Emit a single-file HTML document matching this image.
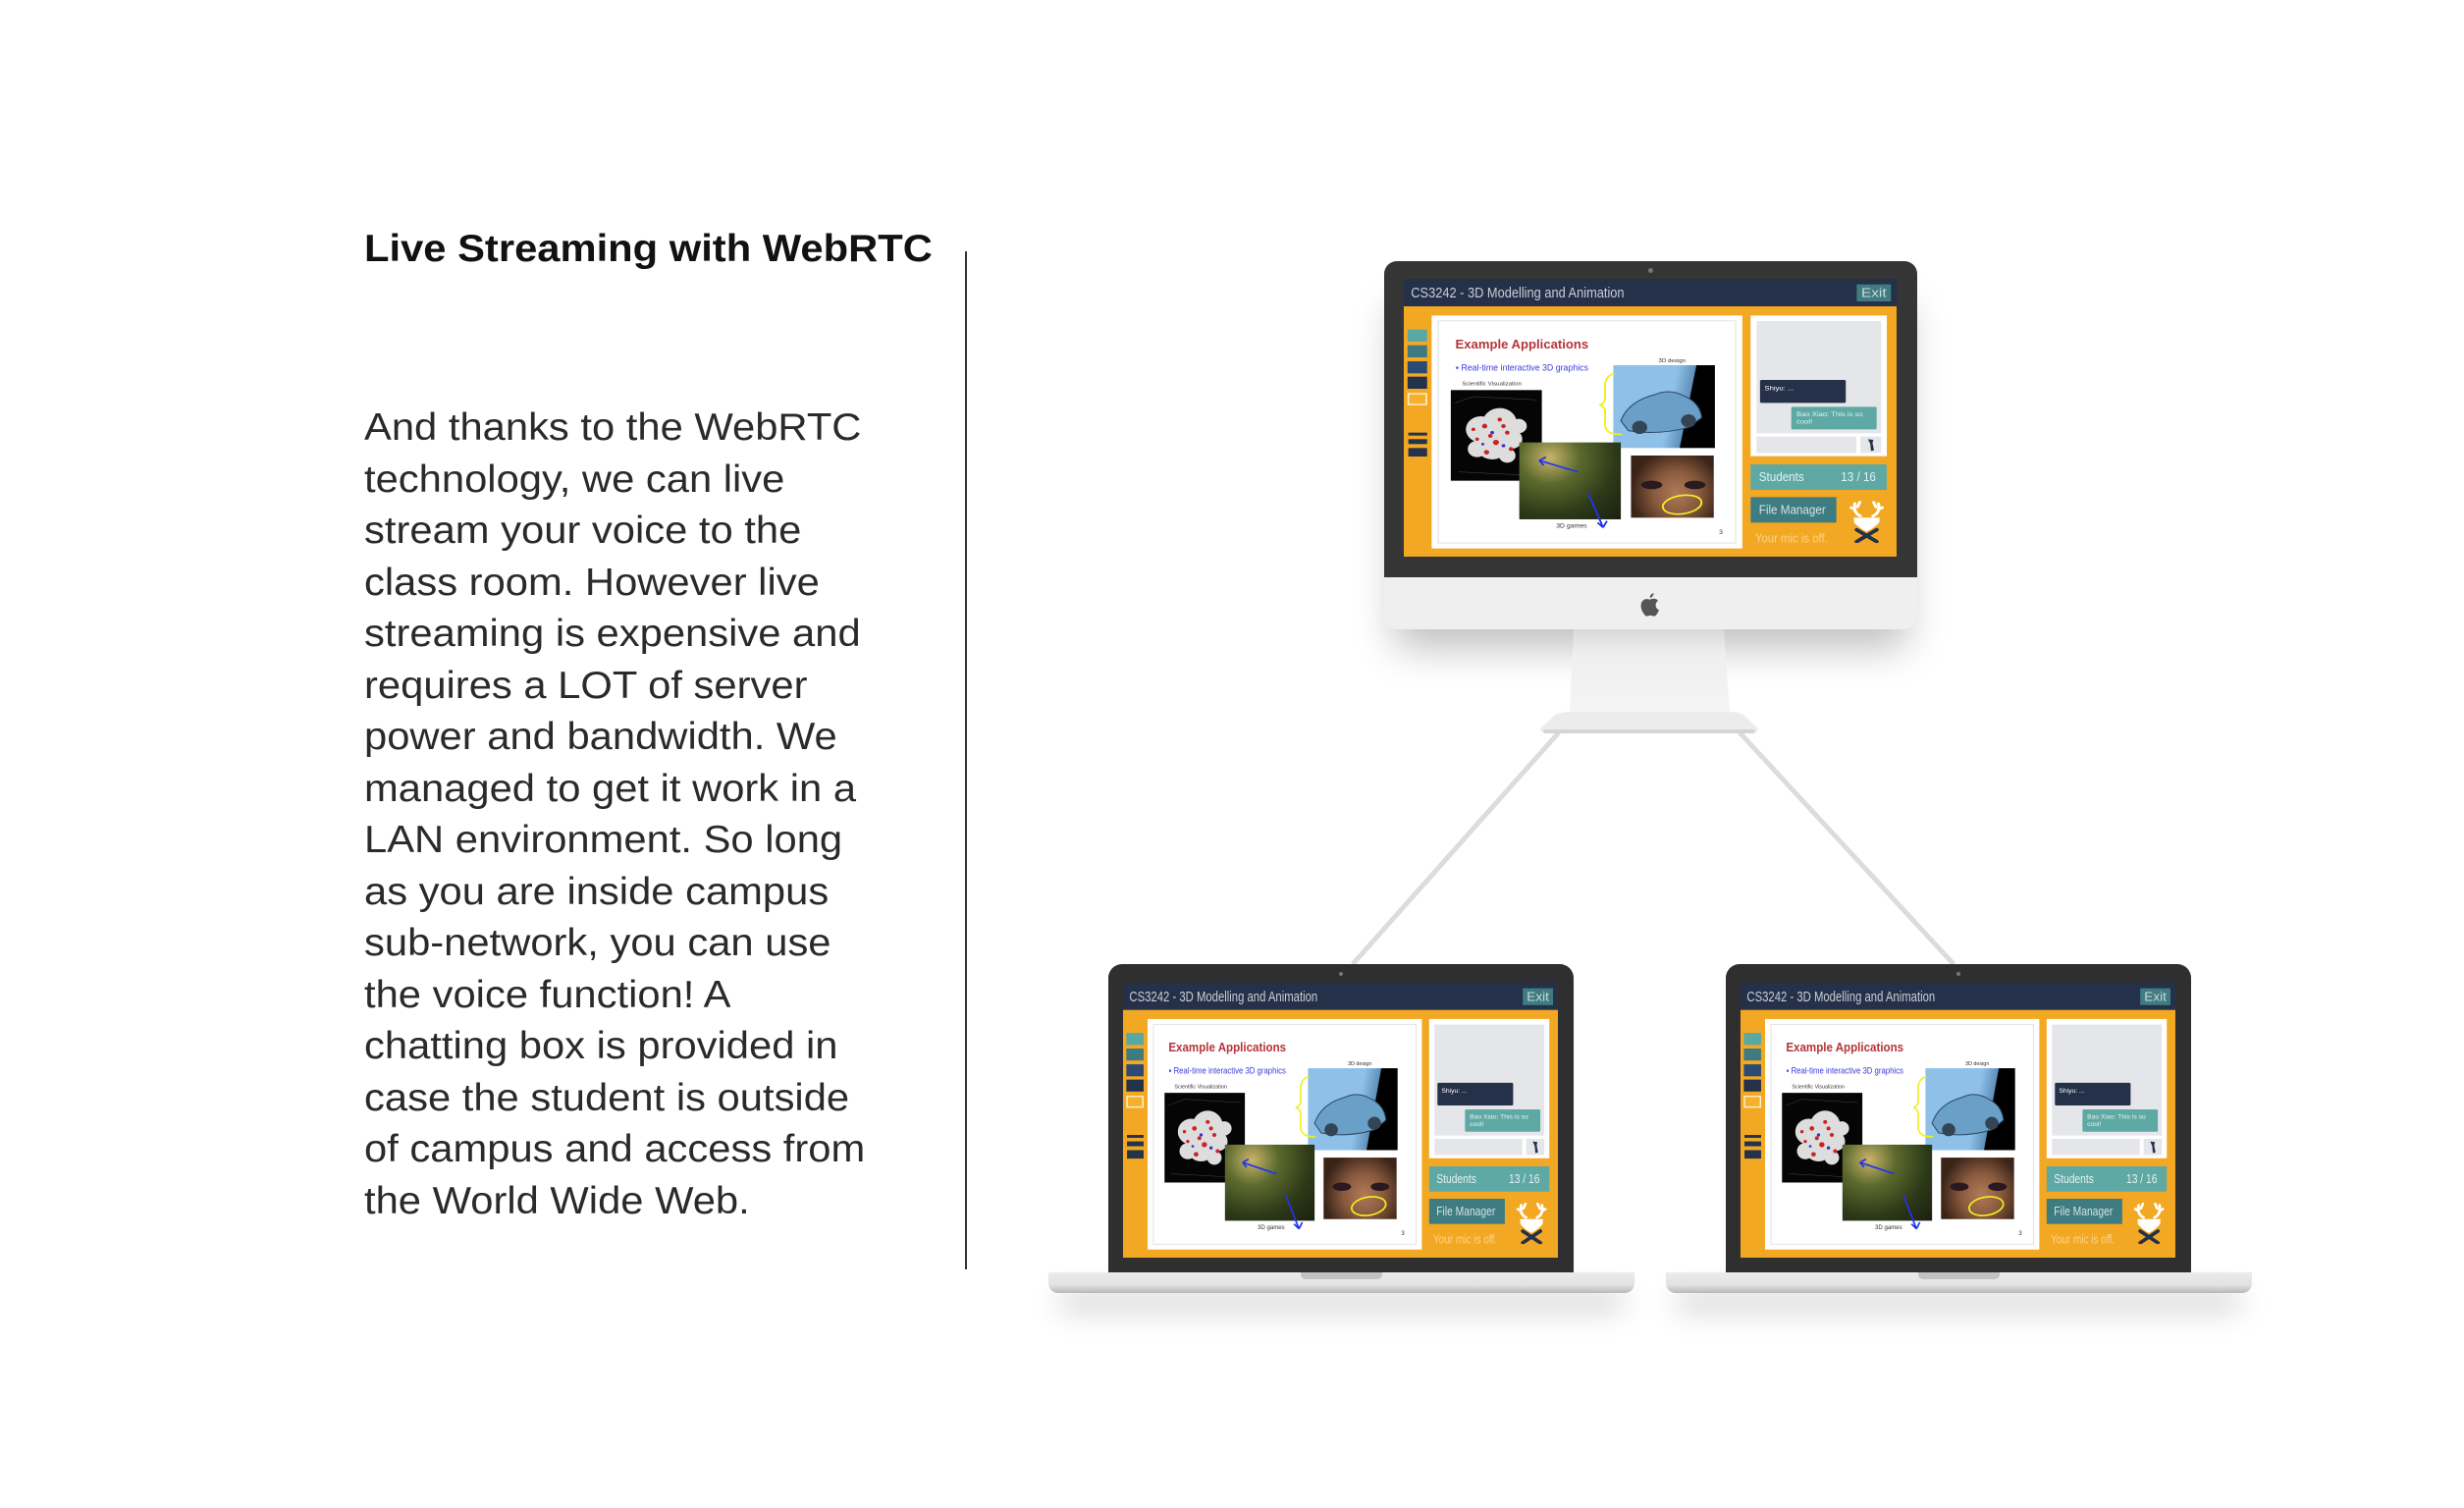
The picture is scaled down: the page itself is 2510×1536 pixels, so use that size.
<!DOCTYPE html>
<html><head><meta charset="utf-8"><style>
*{margin:0;padding:0;box-sizing:border-box}
body{width:2510px;height:1536px;background:#fff;position:relative;overflow:hidden;font-family:"Liberation Sans",sans-serif}
.abs{position:absolute}
.h1{left:371px;top:228px;font-size:39px;line-height:52.5px;font-weight:bold;color:#111;transform:scaleX(1.07);transform-origin:left top;white-space:nowrap}
.body{left:371px;top:410px;font-size:39px;line-height:52.5px;color:#2a2a2a;transform:scaleX(1.07);transform-origin:left top;white-space:nowrap}
.scr{position:absolute;left:0;top:0;width:1310px;height:849px;background:#f3a823;transform-origin:0 0;overflow:hidden;font-family:"Liberation Sans",sans-serif}
.scr div{position:absolute}
.scr span{white-space:nowrap}
.tb{left:0;top:0;width:1310px;height:84px;background:#243149}
.tt{left:19px;top:18px;font-size:44px;color:#c9ced6;white-space:nowrap;transform:scaleX(.76);transform-origin:left top}
.ex{left:1204px;top:17px;width:91px;height:52px;background:#3f7c82;color:#cfd9da;font-size:40px;line-height:52px;text-align:center}
.sq{left:10px;width:52px;height:37px}
.slide{left:74px;top:112px;width:826px;height:712px;background:#fff}
.slin{left:90px;top:127px;width:794px;height:682px;border:3px solid #e2e2e2}
.eat{left:137px;top:180px;font-size:38px;font-weight:bold;color:#b5343a;white-space:nowrap;transform:scaleX(.9);transform-origin:left top}
.bul{left:138px;top:256px;font-size:27px;color:#3a3ae0;white-space:nowrap;transform:scaleX(.85);transform-origin:left top}
.sm{font-size:16px;color:#333;white-space:nowrap}
.mol{left:125px;top:340px;width:242px;height:277px;background:#050505}
.car{left:557px;top:264px;width:270px;height:253px;background:linear-gradient(100deg,#8fc0e8 0 55%,#5d8fb8 70%,#000 70.5%)}
.for{left:307px;top:500px;width:270px;height:235px;background:radial-gradient(ellipse at 30% 20%,#c9b46a 0,#5c6a2e 30%,#2d3a18 65%,#1a1f10 100%)}
.face{left:604px;top:540px;width:220px;height:190px;background:radial-gradient(ellipse 55% 70% at 55% 60%,#b07a58 0,#8a5a3e 50%,#3a2418 100%)}
.rp{left:922px;top:112px;width:362px;height:430px;background:#fff}
.rg{left:938px;top:129px;width:331px;height:343px;background:#e4e6ea}
.b1{left:947px;top:309px;width:228px;height:70px;background:#243149;color:#fff;font-size:20px;padding:14px 12px;border-radius:4px}
.b2{left:1030px;top:391px;width:227px;height:69px;background:#5fa9a5;color:#e6f4f3;font-size:20px;padding:12px 14px;line-height:22px;border-radius:4px}
.inp{left:938px;top:482px;width:265px;height:50px;background:#e4e6ea}
.snd{left:1214px;top:482px;width:55px;height:50px;background:#e4e6ea}
.stu{left:922px;top:567px;width:362px;height:78px;background:#5fa9a5;color:#e3f1f0;font-size:38px;line-height:78px}
.fm{left:922px;top:667px;width:228px;height:78px;background:#3f7c82;color:#d4e3e4;font-size:38px;line-height:78px}
.cx{position:absolute;display:inline-block;transform:scaleX(.8);transform-origin:left center}
.mic{left:934px;top:772px;font-size:38px;color:#fbd38a;white-space:nowrap;transform:scaleX(.78);transform-origin:left top}
</style></head><body>

<div class="abs h1">Live Streaming with WebRTC</div>
<div class="abs body">And thanks to the WebRTC<br>technology, we can live<br>stream your voice to the<br>class room. However live<br>streaming is expensive and<br>requires a LOT of server<br>power and bandwidth. We<br>managed to get it work in a<br>LAN environment. So long<br>as you are inside campus<br>sub-network, you can use<br>the voice function! A<br>chatting box is provided in<br>case the student is outside<br>of campus and access from<br>the World Wide Web.</div>
<div class="abs" style="left:983px;top:256px;width:2px;height:1037px;background:#333"></div>

<svg class="abs" style="left:0;top:0" width="2510" height="1536">
<line x1="1588" y1="746" x2="1378" y2="982" stroke="#dcdcdc" stroke-width="5"/>
<line x1="1772" y1="746" x2="1990" y2="982" stroke="#dcdcdc" stroke-width="5"/>
</svg>

<!-- iMac -->
<div class="abs" style="left:1420px;top:290px;width:523px;height:350px;box-shadow:0 20px 40px rgba(0,0,0,.25);border-radius:14px"></div>
<svg class="abs" style="left:1560px;top:638px" width="240" height="112">
<defs><linearGradient id="st" x1="0" y1="0" x2="0" y2="1"><stop offset="0" stop-color="#d9d9d9"/><stop offset=".3" stop-color="#efefef"/><stop offset="1" stop-color="#f4f4f4"/></linearGradient></defs>
<path d="M43 3 H196 L202 88 H39 Z" fill="url(#st)"/>
<path d="M22 92 Q26 87 40 87 H200 Q214 87 218 92 L231 104 Q232 108 224 108 H16 Q8 108 9 104 Z" fill="#ececec"/>
<rect x="12" y="105" width="216" height="4" rx="2" fill="#d5d5d5"/>
</svg>
<div class="abs" style="left:1410px;top:266px;width:543px;height:322px;background:#353535;border-radius:13px 13px 0 0"></div>
<div class="abs" style="left:1679px;top:273px;width:5px;height:5px;border-radius:50%;background:#777"></div>
<div class="abs" style="left:1410px;top:588px;width:543px;height:53px;background:#efefef;border-radius:0 0 13px 13px"></div>
<svg class="abs" style="left:1671px;top:603px" width="20" height="25" viewBox="0 0 22 28"><path d="M15 1 Q15 5 11 7 Q10 3 15 1 Z M11 8.5 Q13 7.5 15.5 7.6 Q18.5 7.8 20 10 Q17 12 17.3 15.5 Q17.6 19 21 20.5 Q19.5 25 17 27 Q15.5 28 13.8 27.3 Q11 26.2 8.5 27.3 Q6.5 28.2 5 26.5 Q1 22 0.5 17 Q0 11 4 8.8 Q6.5 7.5 9 8.3 Z" fill="#555"/></svg>

<div class="abs" style="left:1430px;top:284px;width:502px;height:283px;overflow:hidden">
<div class="scr" style="transform:scale(.3832,.3333)">
<div class="tb"></div><div class="tt">CS3242 - 3D Modelling and Animation</div><div class="ex">Exit</div>
<div class="sq" style="top:155px;background:#5aa8a4"></div><div class="sq" style="top:203px;background:#3f7a82"></div><div class="sq" style="top:252px;background:#2b4a74"></div><div class="sq" style="top:299px;background:#24324c"></div><div class="sq" style="top:349px;border:4px solid #fff3d6;background:#f6b02c"></div>
<div style="left:12px;top:470px;width:50px;height:9px;background:#24324c"></div><div style="left:12px;top:490px;width:50px;height:15px;background:#24324c"></div><div style="left:12px;top:517px;width:50px;height:26px;background:#24324c"></div>
<div class="slide"></div><div class="slin"></div>
<div class="eat">Example Applications</div>
<div class="bul">▪ Real-time interactive 3D graphics</div>
<div class="sm" style="left:677px;top:242px">3D design</div>
<div class="sm" style="left:155px;top:313px">Scientific Visualization</div>
<div class="mol"><svg width="242" height="277"><g fill="#ddd"><circle cx="80" cy="120" r="40"/><circle cx="130" cy="100" r="45"/><circle cx="110" cy="170" r="42"/><circle cx="160" cy="150" r="30"/><circle cx="70" cy="180" r="25"/><circle cx="150" cy="200" r="22"/><circle cx="180" cy="110" r="22"/></g><g fill="#c22"><circle cx="90" cy="110" r="7"/><circle cx="130" cy="90" r="6"/><circle cx="120" cy="160" r="8"/><circle cx="150" cy="130" r="6"/><circle cx="95" cy="190" r="7"/><circle cx="70" cy="150" r="5"/><circle cx="105" cy="140" r="6"/><circle cx="160" cy="180" r="6"/><circle cx="60" cy="120" r="5"/><circle cx="140" cy="110" r="6"/></g><g fill="#33c"><circle cx="110" cy="130" r="5"/><circle cx="140" cy="170" r="5"/><circle cx="85" cy="165" r="4"/></g><g stroke="#666" fill="none"><path d="M10 40 L60 20 L230 30 M20 250 L200 260"/></g></svg></div>
<div class="car"><svg width="270" height="253"><path d="M20 170 Q40 110 110 90 Q150 70 190 95 Q230 115 235 160 L200 190 Q120 215 40 200 Z" fill="#6a9fc8" stroke="#2a4a66" stroke-width="3"/><circle cx="70" cy="190" r="20" fill="#345"/><circle cx="200" cy="170" r="20" fill="#345"/></svg></div>
<div class="for"></div>
<div class="face"><svg width="220" height="190"><ellipse cx="55" cy="90" rx="28" ry="13" fill="#2a1a20"/><ellipse cx="170" cy="90" rx="28" ry="13" fill="#2a1a20"/></svg></div>
<svg style="position:absolute;left:0;top:0" width="1310" height="849"><path d="M560 290 Q535 295 535 330 L535 370 Q530 385 520 385 Q530 388 535 400 L535 450 Q540 478 580 475" fill="none" stroke="#f2f020" stroke-width="5"/><ellipse cx="740" cy="690" rx="52" ry="28" fill="none" stroke="#f2f020" stroke-width="5" transform="rotate(-10 740 690)"/><path d="M462 590 L360 555 M360 555 L378 545 M360 555 L372 570 M490 655 L530 760 M530 760 L515 745 M530 760 L540 740" stroke="#2233ee" stroke-width="5" fill="none"/></svg>
<div class="sm" style="left:405px;top:745px;font-size:18px">3D games</div>
<div class="sm" style="left:838px;top:764px;font-size:18px">3</div>
<div class="rp"></div><div class="rg"></div>
<div class="b1">Shiyu: ...</div><div class="b2">Bao Xiao: This is so cool!</div>
<div class="inp"></div><div class="snd"><svg width="55" height="50"><path d="M20 8 L34 10 L32 20 L36 42 L28 44 L26 22 Z" fill="#243149"/></svg></div>
<div class="stu"><span class="cx" style="left:22px">Students</span><span class="cx" style="left:240px">13 / 16</span></div>
<div class="fm"><span class="cx" style="left:22px">File Manager</span></div>
<div style="left:1184px;top:675px;width:93px;height:132px"><svg width="93" height="132"><g stroke="#fff" stroke-width="8" fill="none" stroke-linecap="round"><path d="M30 50 Q10 40 15 12 M15 30 L5 24 M22 22 L28 8"/><path d="M63 50 Q83 40 78 12 M78 30 L88 24 M71 22 L65 8"/></g><path d="M12 55 H81 L80 70 Q68 85 46 98 Q24 85 13 70 Z" fill="#fff"/><path d="M20 92 L73 128 M73 92 L20 128" stroke="#243149" stroke-width="11" stroke-linecap="round"/></svg></div>
<div class="mic">Your mic is off.</div>
</div>
</div>

<!-- Laptop 1 -->
<div class="abs" style="left:1080px;top:1300px;width:573px;height:16px;box-shadow:0 18px 30px rgba(0,0,0,.22)"></div>
<div class="abs" style="left:1129px;top:982px;width:474px;height:315px;background:#2f2f2f;border-radius:14px 14px 0 0"></div>
<div class="abs" style="left:1364px;top:990px;width:4px;height:4px;border-radius:50%;background:#777"></div>
<div class="abs" style="left:1068px;top:1296px;width:597px;height:21px;background:linear-gradient(#ececec,#e2e2e2 60%,#b9b9b9);border-radius:0 0 10px 10px"></div>
<div class="abs" style="left:1325px;top:1296px;width:83px;height:7px;background:#c2c2c2;border-radius:0 0 5px 5px"></div>
<div class="abs" style="left:1144px;top:1001px;width:443px;height:280px;overflow:hidden">
<div class="scr" style="transform:scale(.3382,.3298)">
<div class="tb"></div><div class="tt">CS3242 - 3D Modelling and Animation</div><div class="ex">Exit</div>
<div class="sq" style="top:155px;background:#5aa8a4"></div><div class="sq" style="top:203px;background:#3f7a82"></div><div class="sq" style="top:252px;background:#2b4a74"></div><div class="sq" style="top:299px;background:#24324c"></div><div class="sq" style="top:349px;border:4px solid #fff3d6;background:#f6b02c"></div>
<div style="left:12px;top:470px;width:50px;height:9px;background:#24324c"></div><div style="left:12px;top:490px;width:50px;height:15px;background:#24324c"></div><div style="left:12px;top:517px;width:50px;height:26px;background:#24324c"></div>
<div class="slide"></div><div class="slin"></div>
<div class="eat">Example Applications</div>
<div class="bul">▪ Real-time interactive 3D graphics</div>
<div class="sm" style="left:677px;top:242px">3D design</div>
<div class="sm" style="left:155px;top:313px">Scientific Visualization</div>
<div class="mol"><svg width="242" height="277"><g fill="#ddd"><circle cx="80" cy="120" r="40"/><circle cx="130" cy="100" r="45"/><circle cx="110" cy="170" r="42"/><circle cx="160" cy="150" r="30"/><circle cx="70" cy="180" r="25"/><circle cx="150" cy="200" r="22"/><circle cx="180" cy="110" r="22"/></g><g fill="#c22"><circle cx="90" cy="110" r="7"/><circle cx="130" cy="90" r="6"/><circle cx="120" cy="160" r="8"/><circle cx="150" cy="130" r="6"/><circle cx="95" cy="190" r="7"/><circle cx="70" cy="150" r="5"/><circle cx="105" cy="140" r="6"/><circle cx="160" cy="180" r="6"/><circle cx="60" cy="120" r="5"/><circle cx="140" cy="110" r="6"/></g><g fill="#33c"><circle cx="110" cy="130" r="5"/><circle cx="140" cy="170" r="5"/><circle cx="85" cy="165" r="4"/></g><g stroke="#666" fill="none"><path d="M10 40 L60 20 L230 30 M20 250 L200 260"/></g></svg></div>
<div class="car"><svg width="270" height="253"><path d="M20 170 Q40 110 110 90 Q150 70 190 95 Q230 115 235 160 L200 190 Q120 215 40 200 Z" fill="#6a9fc8" stroke="#2a4a66" stroke-width="3"/><circle cx="70" cy="190" r="20" fill="#345"/><circle cx="200" cy="170" r="20" fill="#345"/></svg></div>
<div class="for"></div>
<div class="face"><svg width="220" height="190"><ellipse cx="55" cy="90" rx="28" ry="13" fill="#2a1a20"/><ellipse cx="170" cy="90" rx="28" ry="13" fill="#2a1a20"/></svg></div>
<svg style="position:absolute;left:0;top:0" width="1310" height="849"><path d="M560 290 Q535 295 535 330 L535 370 Q530 385 520 385 Q530 388 535 400 L535 450 Q540 478 580 475" fill="none" stroke="#f2f020" stroke-width="5"/><ellipse cx="740" cy="690" rx="52" ry="28" fill="none" stroke="#f2f020" stroke-width="5" transform="rotate(-10 740 690)"/><path d="M462 590 L360 555 M360 555 L378 545 M360 555 L372 570 M490 655 L530 760 M530 760 L515 745 M530 760 L540 740" stroke="#2233ee" stroke-width="5" fill="none"/></svg>
<div class="sm" style="left:405px;top:745px;font-size:18px">3D games</div>
<div class="sm" style="left:838px;top:764px;font-size:18px">3</div>
<div class="rp"></div><div class="rg"></div>
<div class="b1">Shiyu: ...</div><div class="b2">Bao Xiao: This is so cool!</div>
<div class="inp"></div><div class="snd"><svg width="55" height="50"><path d="M20 8 L34 10 L32 20 L36 42 L28 44 L26 22 Z" fill="#243149"/></svg></div>
<div class="stu"><span class="cx" style="left:22px">Students</span><span class="cx" style="left:240px">13 / 16</span></div>
<div class="fm"><span class="cx" style="left:22px">File Manager</span></div>
<div style="left:1184px;top:675px;width:93px;height:132px"><svg width="93" height="132"><g stroke="#fff" stroke-width="8" fill="none" stroke-linecap="round"><path d="M30 50 Q10 40 15 12 M15 30 L5 24 M22 22 L28 8"/><path d="M63 50 Q83 40 78 12 M78 30 L88 24 M71 22 L65 8"/></g><path d="M12 55 H81 L80 70 Q68 85 46 98 Q24 85 13 70 Z" fill="#fff"/><path d="M20 92 L73 128 M73 92 L20 128" stroke="#243149" stroke-width="11" stroke-linecap="round"/></svg></div>
<div class="mic">Your mic is off.</div>
</div>
</div>

<!-- Laptop 2 -->
<div class="abs" style="left:1709px;top:1300px;width:573px;height:16px;box-shadow:0 18px 30px rgba(0,0,0,.22)"></div>
<div class="abs" style="left:1758px;top:982px;width:474px;height:315px;background:#2f2f2f;border-radius:14px 14px 0 0"></div>
<div class="abs" style="left:1993px;top:990px;width:4px;height:4px;border-radius:50%;background:#777"></div>
<div class="abs" style="left:1697px;top:1296px;width:597px;height:21px;background:linear-gradient(#ececec,#e2e2e2 60%,#b9b9b9);border-radius:0 0 10px 10px"></div>
<div class="abs" style="left:1954px;top:1296px;width:83px;height:7px;background:#c2c2c2;border-radius:0 0 5px 5px"></div>
<div class="abs" style="left:1773px;top:1001px;width:443px;height:280px;overflow:hidden">
<div class="scr" style="transform:scale(.3382,.3298)">
<div class="tb"></div><div class="tt">CS3242 - 3D Modelling and Animation</div><div class="ex">Exit</div>
<div class="sq" style="top:155px;background:#5aa8a4"></div><div class="sq" style="top:203px;background:#3f7a82"></div><div class="sq" style="top:252px;background:#2b4a74"></div><div class="sq" style="top:299px;background:#24324c"></div><div class="sq" style="top:349px;border:4px solid #fff3d6;background:#f6b02c"></div>
<div style="left:12px;top:470px;width:50px;height:9px;background:#24324c"></div><div style="left:12px;top:490px;width:50px;height:15px;background:#24324c"></div><div style="left:12px;top:517px;width:50px;height:26px;background:#24324c"></div>
<div class="slide"></div><div class="slin"></div>
<div class="eat">Example Applications</div>
<div class="bul">▪ Real-time interactive 3D graphics</div>
<div class="sm" style="left:677px;top:242px">3D design</div>
<div class="sm" style="left:155px;top:313px">Scientific Visualization</div>
<div class="mol"><svg width="242" height="277"><g fill="#ddd"><circle cx="80" cy="120" r="40"/><circle cx="130" cy="100" r="45"/><circle cx="110" cy="170" r="42"/><circle cx="160" cy="150" r="30"/><circle cx="70" cy="180" r="25"/><circle cx="150" cy="200" r="22"/><circle cx="180" cy="110" r="22"/></g><g fill="#c22"><circle cx="90" cy="110" r="7"/><circle cx="130" cy="90" r="6"/><circle cx="120" cy="160" r="8"/><circle cx="150" cy="130" r="6"/><circle cx="95" cy="190" r="7"/><circle cx="70" cy="150" r="5"/><circle cx="105" cy="140" r="6"/><circle cx="160" cy="180" r="6"/><circle cx="60" cy="120" r="5"/><circle cx="140" cy="110" r="6"/></g><g fill="#33c"><circle cx="110" cy="130" r="5"/><circle cx="140" cy="170" r="5"/><circle cx="85" cy="165" r="4"/></g><g stroke="#666" fill="none"><path d="M10 40 L60 20 L230 30 M20 250 L200 260"/></g></svg></div>
<div class="car"><svg width="270" height="253"><path d="M20 170 Q40 110 110 90 Q150 70 190 95 Q230 115 235 160 L200 190 Q120 215 40 200 Z" fill="#6a9fc8" stroke="#2a4a66" stroke-width="3"/><circle cx="70" cy="190" r="20" fill="#345"/><circle cx="200" cy="170" r="20" fill="#345"/></svg></div>
<div class="for"></div>
<div class="face"><svg width="220" height="190"><ellipse cx="55" cy="90" rx="28" ry="13" fill="#2a1a20"/><ellipse cx="170" cy="90" rx="28" ry="13" fill="#2a1a20"/></svg></div>
<svg style="position:absolute;left:0;top:0" width="1310" height="849"><path d="M560 290 Q535 295 535 330 L535 370 Q530 385 520 385 Q530 388 535 400 L535 450 Q540 478 580 475" fill="none" stroke="#f2f020" stroke-width="5"/><ellipse cx="740" cy="690" rx="52" ry="28" fill="none" stroke="#f2f020" stroke-width="5" transform="rotate(-10 740 690)"/><path d="M462 590 L360 555 M360 555 L378 545 M360 555 L372 570 M490 655 L530 760 M530 760 L515 745 M530 760 L540 740" stroke="#2233ee" stroke-width="5" fill="none"/></svg>
<div class="sm" style="left:405px;top:745px;font-size:18px">3D games</div>
<div class="sm" style="left:838px;top:764px;font-size:18px">3</div>
<div class="rp"></div><div class="rg"></div>
<div class="b1">Shiyu: ...</div><div class="b2">Bao Xiao: This is so cool!</div>
<div class="inp"></div><div class="snd"><svg width="55" height="50"><path d="M20 8 L34 10 L32 20 L36 42 L28 44 L26 22 Z" fill="#243149"/></svg></div>
<div class="stu"><span class="cx" style="left:22px">Students</span><span class="cx" style="left:240px">13 / 16</span></div>
<div class="fm"><span class="cx" style="left:22px">File Manager</span></div>
<div style="left:1184px;top:675px;width:93px;height:132px"><svg width="93" height="132"><g stroke="#fff" stroke-width="8" fill="none" stroke-linecap="round"><path d="M30 50 Q10 40 15 12 M15 30 L5 24 M22 22 L28 8"/><path d="M63 50 Q83 40 78 12 M78 30 L88 24 M71 22 L65 8"/></g><path d="M12 55 H81 L80 70 Q68 85 46 98 Q24 85 13 70 Z" fill="#fff"/><path d="M20 92 L73 128 M73 92 L20 128" stroke="#243149" stroke-width="11" stroke-linecap="round"/></svg></div>
<div class="mic">Your mic is off.</div>
</div>
</div>

</body></html>
